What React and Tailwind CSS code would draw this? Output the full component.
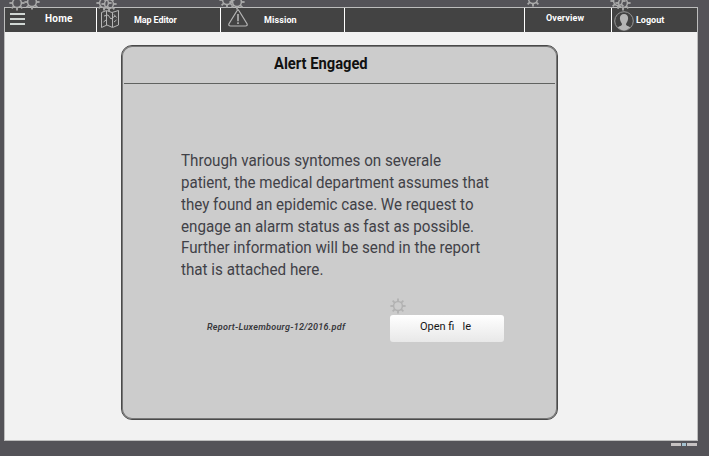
import React from 'react';

function Gear({ className }) {
  return (
    <svg viewBox="0 0 16 16" className={`absolute h-4 w-4 ${className}`} fill="none" stroke="currentColor">
      <circle cx="8" cy="8" r="4.4" strokeWidth="1.5" />
      {[0, 45, 90, 135, 180, 225, 270, 315].map((a) => (
        <path key={a} d="M8 3.6V0.4" strokeWidth="1.8" transform={`rotate(${a} 8 8)`} />
      ))}
    </svg>
  );
}

function MapIcon() {
  return (
    <svg viewBox="0 0 20 20" className="h-5 w-5 text-[#b5b5b5]" fill="none" stroke="currentColor" strokeWidth="1">
      <path d="M1.5 3.5L6.5 1.5L12 3.5L18.5 1.5V16L12.5 18.5L7 16L1.5 18.5Z" />
      <path d="M6.5 2V16M12.5 4V18M4 7L8 6L11 10L15 7M3.5 13L6 11M14 5.5L16.5 8.5M14 13L16.5 11" />
    </svg>
  );
}

function AlertIcon() {
  return (
    <svg viewBox="0 0 20 20" className="h-5 w-5" fill="none" stroke="#b5b5b5">
      <path d="M9 2.8Q10 1 11 2.8L19 15.8Q19.8 18 17.5 18H2.5Q0.2 18 1 15.8Z" strokeWidth="1.2" />
      <path d="M10 6V13.2M10 14.3V16" strokeWidth="1.6" />
    </svg>
  );
}

function UserIcon() {
  return (
    <svg viewBox="0 0 20 20" className="h-5 w-5" fill="none">
      <circle cx="10" cy="10" r="9.3" stroke="#989898" />
      <path d="M10 3C6.8 3 5.6 5.2 6 8.3C6.3 10.7 7.5 11.5 8 13C8 15 4.8 15.2 3.8 16.6Q10 22 16.2 16.6C15.2 15.2 12 15 12 13C12.5 11.5 13.7 10.7 14 8.3C14.4 5.2 13.2 3 10 3Z" fill="#b5b5b5" />
    </svg>
  );
}

const label = 'whitespace-nowrap text-[9px] leading-3 font-bold text-white';
const lines = [
  ['Through various syntomes on severale', 'h-[22px] scale-x-[0.95]'],
  ['patient, the medical department assumes that', 'h-[22px] scale-x-[0.942]'],
  ['they found an epidemic case. We request to', 'h-[22px] scale-x-[0.943]'],
  ['engage an alarm status as fast as possible.', 'h-[21px] scale-x-[0.949]'],
  ['Further information will be send in the report', 'h-[22px] scale-x-[0.948]'],
  ['that is attached here.', 'h-[22px] scale-x-[0.95]'],
];

export default function App() {
  return (
    <div className="relative h-[456px] w-[709px] overflow-hidden bg-[#545358] pt-[7px] pl-1 font-['Roboto',sans-serif]">
      <main className="flex h-[434px] w-[694px] flex-col border border-[#bdbdbd] bg-[#f2f2f2]">
        <nav className="flex h-6 shrink-0 bg-[#434343]">
          <div className="flex w-[92px] border-r border-white">
            <div className="mt-[5px] ml-[5px] flex h-[12px] w-[15px] flex-col justify-between">
              <span className="h-[2px] bg-[#d0d6d3]" />
              <span className="h-[2px] bg-[#d0d6d3]" />
              <span className="h-[2px] bg-[#d0d6d3]" />
            </div>
            <span className="mt-[5px] ml-[20px] text-[10px] leading-3 font-bold tracking-[0.25px] whitespace-nowrap text-white">Home</span>
          </div>
          <div className="flex w-[124px] border-r border-white pl-[3px]">
            <div className="mt-px"><MapIcon /></div>
            <span className={`mt-[6px] ml-[14px] tracking-[-0.1px] ${label}`}>Map Editor</span>
          </div>
          <div className="flex w-[124px] border-r border-white pl-[7px]">
            <div><AlertIcon /></div>
            <span className={`mt-[6px] ml-[16px] tracking-[0.1px] ${label}`}>Mission</span>
          </div>
          <div className="w-[180px] border-r border-white" />
          <div className="flex w-[87px] border-r border-white pl-[21px]">
            <span className={`mt-[4px] tracking-[0.1px] ${label}`}>Overview</span>
          </div>
          <div className="flex pl-[2px]">
            <div className="mt-[3px]"><UserIcon /></div>
            <span className={`mt-[6px] ml-[2px] ${label}`}>Logout</span>
          </div>
        </nav>
        <section className="mt-[13px] ml-[116px] flex h-[375px] w-[437px] flex-col rounded-[11px] border border-[#4a4a4a] bg-[#cccccc] shadow-[inset_0_0_0_1px_#777]">
          <header className="mx-[2px] flex h-[38px] shrink-0 justify-center border-b border-[#606260] pr-[38px]">
            <h1 className="mt-[8px] scale-x-[0.92] text-[16px] leading-5 font-bold whitespace-nowrap text-[#111]">Alert Engaged</h1>
          </header>
          <div className="mt-[66px] ml-[59px] text-[16px] leading-[22px] text-[#414147]">
            {lines.map(([line, height]) => (
              <p key={line} className={`w-max origin-left whitespace-nowrap ${height}`}>{line}</p>
            ))}
          </div>
          <div className="mt-[34px] ml-[85px] flex">
            <span className="mt-[6px] w-[183px] text-[9px] leading-3 font-semibold tracking-[0.28px] whitespace-nowrap text-[#38383c] italic">Report-Luxembourg-12/2016.pdf</span>
            <button className="h-[27px] w-[114px] rounded-[3px] bg-gradient-to-b from-white to-[#e8e8e8] pr-[3px] pb-[4px] text-center text-[11px] leading-4 whitespace-pre text-[#161616]">Open fi   le</button>
          </div>
        </section>
      </main>
      <Gear className="top-[-5px] left-[9px] text-[#aaa]" />
      <Gear className="top-[-6px] left-[24px] text-[#aaa]" />
      <Gear className="top-[-5px] left-[96px] text-[#aaa]" />
      <Gear className="top-[-4px] left-[101px] text-[#aaa]" />
      <Gear className="top-[-8px] left-[219px] text-[#aaa]" />
      <Gear className="top-[-6px] left-[229px] text-[#aaa]" />
      <Gear className="top-[-9px] left-[525px] text-[#aaa]" />
      <Gear className="top-[-7px] left-[610px] text-[#aaa]" />
      <Gear className="top-[-5px] left-[615px] text-[#aaa]" />
      <Gear className="top-[298px] left-[390px] text-[#b2b2b2]" />
      <div className="mt-[2px] ml-[667px] flex h-[3px] w-[26px] gap-px">
        <span className="w-[10px] bg-[#c6c2c2]" />
        <span className="w-[4px] bg-[#a5c2d0]" />
        <span className="w-[10px] bg-[#c6c2c2]" />
      </div>
    </div>
  );
}
